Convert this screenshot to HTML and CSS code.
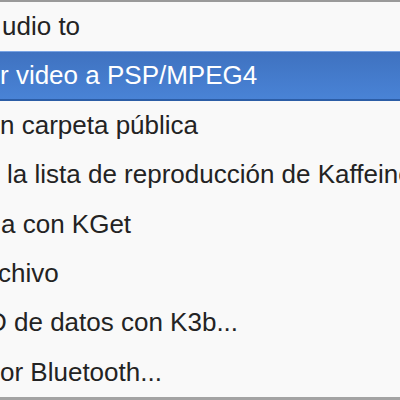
FILE: index.html
```html
<!DOCTYPE html>
<html>
<head>
    <meta charset="UTF-8">
    <title>Acciones</title>
    <!-- Styling for the context menu -->
    <link rel="stylesheet" href="styles.css">
</head>
<body>
    <div class="menu">
        <div class="item"><span class="label shift-audio">udio to</span></div>
        <div class="item active"><span class="label">r video a PSP/MPEG4</span></div>
        <div class="item"><span class="label">n carpeta pública</span></div>
        <div class="item"><span class="label shift-kaffeine">la lista de reproducción de Kaffeine</span></div>
        <div class="item"><span class="label shift-kget">a con KGet</span></div>
        <div class="item"><span class="label shift-zip">chivo</span></div>
        <div class="item"><span class="label shift-k3b">D de datos con K3b...</span></div>
        <div class="item"><span class="label shift-bt">or Bluetooth...</span></div>
    </div>
</body>
</html>
```

FILE: styles.css
```css
html, body {
    margin: 0;
    padding: 0;
}
body {
    background-color: #f9f9f9;
    font-family: "Liberation Sans", Arial, sans-serif;
}
.menu {
    width: 400px;
    height: 400px;
    box-sizing: border-box;
    border-top: 2px solid #9a9a9a;
    border-bottom: 3px solid #a3a3a3;
    background-color: #f9f9f9;
    display: grid;
    grid-template-rows: repeat(8, 1fr);
    overflow: hidden;
}
.item {
    display: flex;
    align-items: center;
    color: #232323;
    font-size: 26px;
    white-space: nowrap;
    overflow: hidden;
}
.active {
    color: #ffffff;
    background: linear-gradient(#3f72c0, #4983d6);
    border-top: 1px solid #79a4e4;
    border-bottom: 2px solid #2c5da6;
}
.label {
    margin-left: 0;
}
.shift-audio { margin-left: 2px; }
.shift-kaffeine { margin-left: 7px; }
.shift-kget { margin-left: 1px; }
.shift-zip { margin-left: -2px; }
.shift-k3b { margin-left: -12px; }
.shift-bt { margin-left: 0; }
```
